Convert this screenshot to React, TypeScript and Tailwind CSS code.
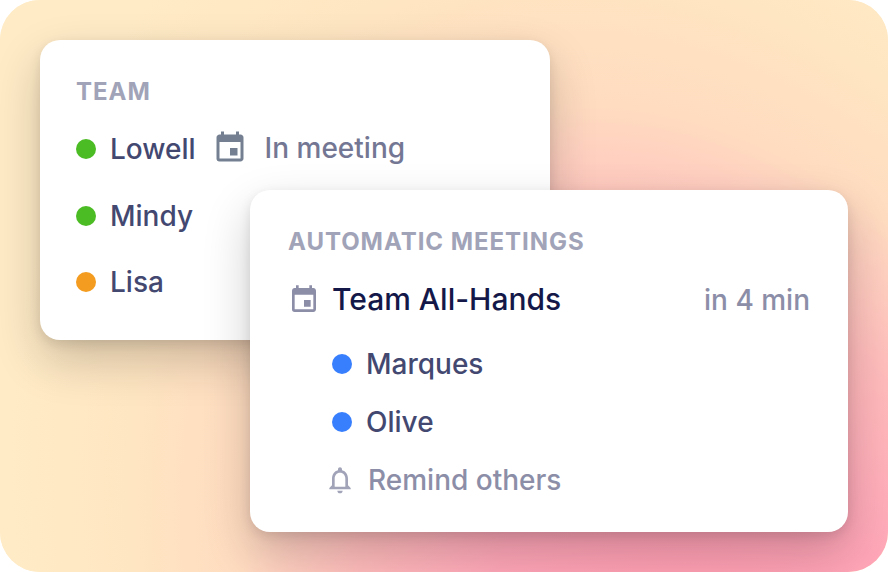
import { MdEvent, MdNotificationsNone } from 'react-icons/md';

const shadow = 'shadow-[0_20px_48px_rgba(0,0,0,0.2),0_4px_12px_rgba(0,0,0,0.1)]';

function Person({ name, dot }: { name: string; dot: string }) {
  return (
    <div className="flex items-center gap-3.5">
      <span className={`size-5 shrink-0 rounded-full ${dot}`} />
      <span className="text-[28px] leading-9 font-[450] text-[#434871]">{name}</span>
    </div>
  );
}

export default function App() {
  return (
    <main className="h-[572px] w-[888px] overflow-hidden bg-white font-['Inter',sans-serif]">
      <div className="relative isolate h-full overflow-hidden rounded-[40px] bg-[#ffebc6] pt-10">
        <div className="absolute -top-[600px] -left-[500px] -z-10 h-[2600px] w-[2440px] -rotate-[26deg] bg-[radial-gradient(ellipse_392px_563px_at_center,#ff9eb3_20%,#ffa6b8_52%,#ffbbbb_83%,#ffcec0_100%,#ffdcc0_112%,#ffe6c2_138%,#ffebc6_165%)]" />
        <section className={`ml-10 h-[300px] w-[510px] rounded-[20px] bg-white px-9 pt-9 ${shadow}`}>
          <h2 className="text-2xl leading-8 font-bold tracking-[0.04em] text-[#a1a3b8]">TEAM</h2>
          <div className="mt-[23px] flex h-9 items-center">
            <Person name="Lowell" dot="bg-[#4cbc24]" />
            <MdEvent className="mb-0.5 ml-4 size-9 text-[#748091]" />
            <span className="mb-0.5 ml-[17px] text-[28px] leading-9 font-[450] text-[#747793]">In meeting</span>
          </div>
          <div className="mt-[31px]"><Person name="Mindy" dot="bg-[#4cbc24]" /></div>
          <div className="mt-[30px]"><Person name="Lisa" dot="bg-[#f39c1f]" /></div>
        </section>
        <section className={`relative -mt-[150px] ml-[250px] h-[342px] w-[598px] rounded-[20px] bg-white px-[38px] pt-9 ${shadow}`}>
          <h2 className="text-2xl leading-8 font-bold tracking-[0.04em] text-[#a1a3b8]">AUTOMATIC MEETINGS</h2>
          <div className="mt-[22px] flex h-10 items-center">
            <MdEvent className="size-8 text-[#8c8da7]" />
            <span className="mb-0.5 ml-3 text-[30px] leading-10 font-[450] text-[#141849]">Team All-Hands</span>
            <span className="ml-auto text-[28px] leading-10 font-[450] text-[#8c8ea8]">in 4 min</span>
          </div>
          <div className="mt-[26px] ml-11 flex flex-col gap-[22px]">
            <Person name="Marques" dot="bg-[#387ffd]" />
            <Person name="Olive" dot="bg-[#387ffd]" />
            <div className="-ml-2 flex h-9 items-center gap-3">
              <MdNotificationsNone className="size-8 text-[#a1a3b8]" />
              <span className="text-[28px] leading-9 font-[450] text-[#8c8ea8]">Remind others</span>
            </div>
          </div>
        </section>
      </div>
    </main>
  );
}
